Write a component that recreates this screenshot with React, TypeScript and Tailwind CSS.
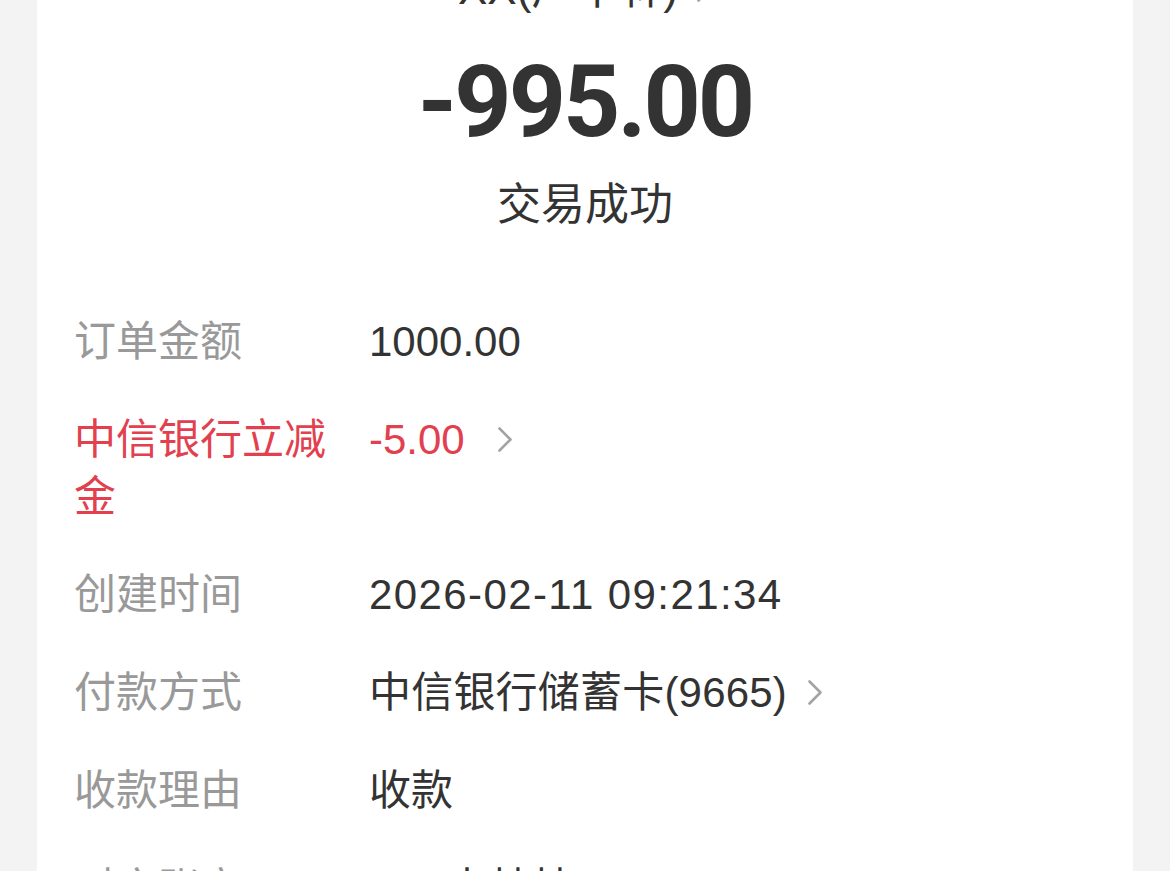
import React from "react";

const Chevron = ({ className = "" }: { className?: string }) => (
  <svg
    className={className}
    width="16"
    height="27"
    viewBox="0 0 16 27"
    fill="none"
    stroke="#a3a3a3"
    strokeWidth="2.6"
    strokeLinecap="round"
    strokeLinejoin="round"
  >
    <polyline points="2.5,2.5 13.5,13.5 2.5,24.5" />
  </svg>
);

type Row = {
  label: string;
  value: string;
  red?: boolean;
  chevronClass?: string;
  valueClass?: string;
};

const rows: Row[] = [
  { label: "订单金额", value: "1000.00" },
  { label: "中信银行立减金", value: "-5.00", red: true, chevronClass: "ml-[32px]" },
  { label: "创建时间", value: "2026-02-11 09:21:34", valueClass: "tracking-[1.4px]" },
  { label: "付款方式", value: "中信银行储蓄卡(9665)", valueClass: "tracking-[0.2px]", chevronClass: "ml-[20px]" },
  { label: "收款理由", value: "收款" },
  { label: "对方账户", value: "xxx(丰林林)" },
];

export default function App() {
  return (
    <div
      className="h-[871px] overflow-hidden bg-[#f3f3f3] px-[37px]"
      style={{ fontFamily: '"Liberation Sans", "Noto Sans CJK SC", sans-serif' }}
    >
      <div className="h-full bg-white">
        <div className="flex flex-col items-center text-[#333333]">
          <div className="mt-[-33px] flex items-center text-[44px] leading-[44px]">
            <span>XX(广丰林)</span>
            <Chevron className="ml-[18px]" />
          </div>
          <div className="mt-[41px] text-[100px] font-bold leading-[100px] tracking-[-3px] text-[#333333] [font-family:Roboto,'Liberation_Sans',sans-serif]">
            -995.00
          </div>
          <div className="mt-[31px] text-[44px] leading-[44px]">交易成功</div>
        </div>
        <div className="mt-[86px] flex flex-col gap-[41px] px-[37px] text-[42px] leading-[57px]">
          {rows.map((r) => (
            <div key={r.label} className="flex">
              <div
                className={`w-[295px] shrink-0 pr-[30px] ${
                  r.red ? "text-[#e2404e]" : "text-[#999999]"
                }`}
              >
                {r.label}
              </div>
              <div className="flex h-[57px] items-center">
                <span
                  className={`${r.red ? "text-[#e2404e]" : "text-[#333333]"} ${
                    r.valueClass ?? ""
                  }`}
                >
                  {r.value}
                </span>
                {r.chevronClass && <Chevron className={r.chevronClass} />}
              </div>
            </div>
          ))}
        </div>
      </div>
    </div>
  );
}
